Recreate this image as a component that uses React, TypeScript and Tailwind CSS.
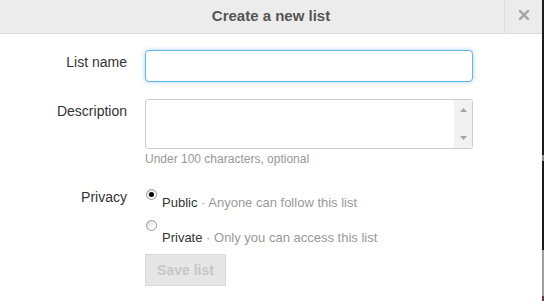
import React from "react";

function Radio({ checked }: { checked?: boolean }) {
  return (
    <span className="flex h-[11px] w-[11px] shrink-0 items-center justify-center rounded-full border border-[#9a9a9a] bg-[linear-gradient(135deg,#d8d8d8,#ffffff_70%)]">
      {checked ? <span className="h-[5px] w-[5px] rounded-full bg-black" /> : null}
    </span>
  );
}

export default function App() {
  return (
    <div className="flex h-[301px] w-[544px] bg-white font-['Liberation_Sans',Arial,sans-serif]">
      <div className="flex w-[542px] flex-col">
        {/* header */}
        <div className="grid h-[34px] border-b border-[#dadada] bg-[#ececec]">
          <div className="col-start-1 row-start-1 pt-[6px] text-center text-[15px] font-bold leading-[20px] text-[#555]">
            Create a new list
          </div>
          <div className="col-start-1 row-start-1 flex justify-end">
            <div className="flex w-[38px] items-start justify-center border-l border-[#dcdcdc] pt-[10px]">
              <svg width="10" height="10" viewBox="0 0 10 10">
                <path d="M1 1 L9 9 M9 1 L1 9" stroke="#a3a3a3" strokeWidth="2.4" strokeLinecap="square" />
              </svg>
            </div>
          </div>
        </div>

        {/* body */}
        <div className="grid grid-cols-[127px_328px] gap-x-[18px] pt-[16px] text-[#333]">
          {/* list name */}
          <div className="pt-[2px] text-right text-[14px] leading-[20px]">List name</div>
          <div className="h-[32px] rounded-[4px] border border-[#66b3ea] bg-white shadow-[0_0_5px_rgba(102,175,233,0.55)]" />

          {/* description */}
          <div className="mt-[17px] pt-[2px] text-right text-[14px] leading-[20px]">Description</div>
          <div className="mt-[17px] flex flex-col">
            <div className="flex h-[50px] rounded-[3px] border border-[#cccccc] bg-white">
              <div className="flex-1" />
              <div className="flex w-[18px] flex-col items-center justify-between bg-[#f1f1f1] py-[8px]">
                <svg width="7" height="4" viewBox="0 0 7 4">
                  <path d="M0 4 L3.5 0 L7 4 Z" fill="#a3a3a3" />
                </svg>
                <svg width="7" height="4" viewBox="0 0 7 4">
                  <path d="M0 0 L3.5 4 L7 0 Z" fill="#a3a3a3" />
                </svg>
              </div>
            </div>
            <div className="mt-[2px] text-[12px] leading-[16px] text-[#999]">Under 100 characters, optional</div>
          </div>

          {/* privacy */}
          <div className="mt-[20px] text-right text-[14px] leading-[20px]">Privacy</div>
          <div className="mt-[21px] flex flex-col items-start">
            <div className="flex items-start">
              <div className="ml-[1px] mr-[5px] mt-[1px]">
                <Radio checked />
              </div>
              <div className="mt-[6px] text-[13px] leading-[18px]">
                <span className="text-[#333]">Public</span>
                <span className="text-[#999]"> · Anyone can follow this list</span>
              </div>
            </div>
            <div className="mt-[7px] flex items-start">
              <div className="ml-[1px] mr-[5px] mt-[1px]">
                <Radio />
              </div>
              <div className="mt-[10px] text-[13px] leading-[18px]">
                <span className="text-[#333]">Private</span>
                <span className="text-[#999]"> · Only you can access this list</span>
              </div>
            </div>
            <button className="mt-[7px] flex h-[32px] w-[81px] items-center justify-center border border-[#dadada] bg-[#e6e6e6] text-[14px] font-bold text-[#c6c6c6]">
              Save list
            </button>
          </div>
        </div>
      </div>

      {/* right edge strip */}
      <div className="flex w-[2px] flex-col">
        <div className="h-[155px] bg-[#1c1c1c]" />
        <div className="h-[6px] bg-[#8a8a8a]" />
        <div className="h-[89px] bg-[#1c1c1c]" />
        <div className="h-[46px] bg-[#a0a0a0]" />
        <div className="flex-1 bg-[#6e3b3b]" />
      </div>
    </div>
  );
}
